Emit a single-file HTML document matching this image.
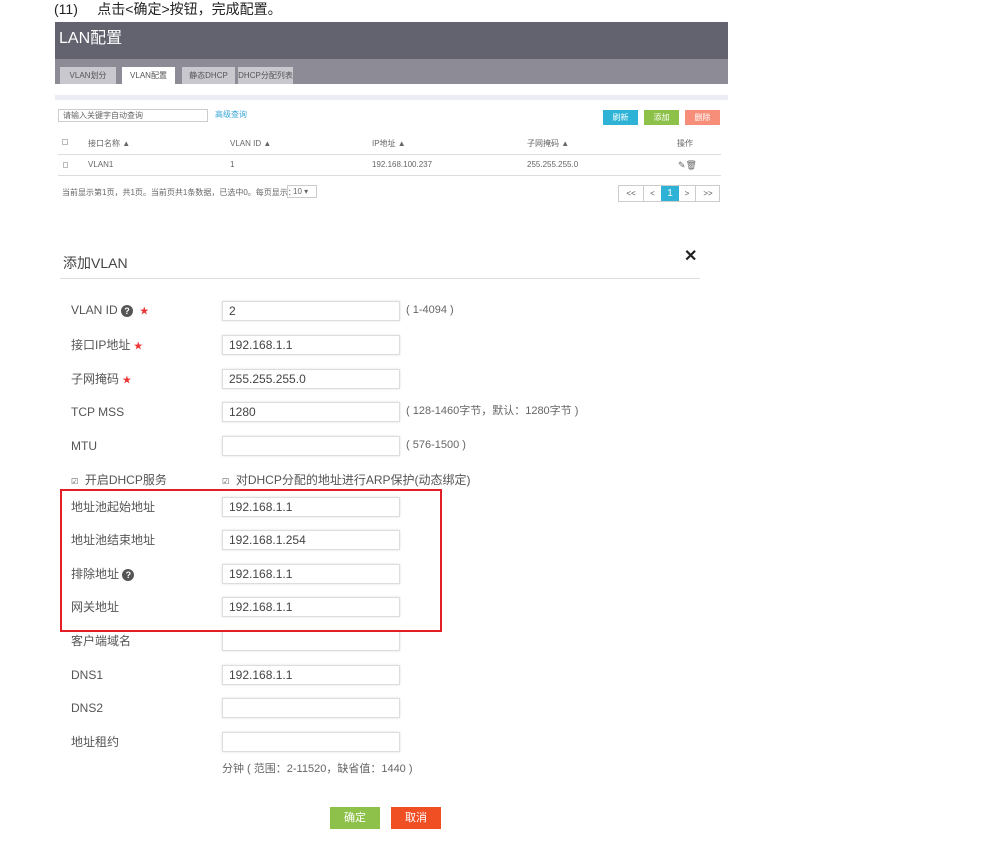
<!DOCTYPE html>
<html><head><meta charset="utf-8"><style>
*{margin:0;padding:0;box-sizing:border-box}
body{width:1005px;height:842px;background:#fff;position:relative;overflow:hidden;font-family:"Liberation Sans","Noto Sans CJK SC",sans-serif;color:#555}
.a{position:absolute;white-space:nowrap}
.s{font-size:8px;color:#666;line-height:10px}
.lab{font-size:12px;color:#555;line-height:14px}
.in{position:absolute;left:222px;width:178px;height:20px;border:1px solid #ddd;box-shadow:0 0 2px #ddd;font-size:12px;color:#444;padding:3px 6px;line-height:13px}
.hint{font-size:11px;color:#666;line-height:13px}
.star{color:#e33;font-size:9px}
.q{display:inline-block;width:12px;height:12px;border-radius:50%;background:#555;color:#fff;font-size:9px;text-align:center;line-height:12px;font-weight:bold;vertical-align:middle}
.btn{position:absolute;height:15px;color:#fff;font-size:8px;text-align:center;line-height:15px}
.tab{position:absolute;top:67px;height:17px;background:#c9c8ce;font-size:8px;color:#555;text-align:center;line-height:17px}
</style></head><body>
<div class="a" style="left:54px;top:0;font-size:14px;color:#222;line-height:18px">(11)&nbsp;&nbsp;&nbsp;&nbsp; 点击&lt;确定&gt;按钮，完成配置。</div>
<div class="a" style="left:55px;top:22px;width:673px;height:37px;background:#62636f"></div>
<div class="a" style="left:59px;top:30px;font-size:16px;color:#fff;line-height:18px">LAN配置</div>
<div class="a" style="left:55px;top:59px;width:673px;height:25px;background:#8d8c96"></div>
<div class="tab" style="left:60px;width:56px">VLAN划分</div>
<div class="tab" style="left:122px;width:53px;background:#fff">VLAN配置</div>
<div class="tab" style="left:182px;width:53px">静态DHCP</div>
<div class="tab" style="left:238px;width:55px">DHCP分配列表</div>
<div class="a" style="left:55px;top:95px;width:673px;height:5px;background:#ecedf4"></div>
<div class="a s" style="left:58px;top:109px;width:150px;height:13px;border:1px solid #ccc;padding:1px 4px;line-height:10px">请输入关键字自动查询</div>
<div class="a s" style="left:215px;top:110px;color:#3aa6d8">高级查询</div>
<div class="btn" style="left:603px;top:110px;width:35px;background:#2eb3d6">刷新</div>
<div class="btn" style="left:644px;top:110px;width:35px;background:#8dc149">添加</div>
<div class="btn" style="left:685px;top:110px;width:35px;background:#f68e7a">删除</div>
<div class="a" style="left:62px;top:139px;width:6px;height:6px;border:1px solid #bbb"></div>
<div class="a s" style="left:88px;top:139px">接口名称 ▲</div>
<div class="a s" style="left:230px;top:139px">VLAN ID ▲</div>
<div class="a s" style="left:372px;top:139px">IP地址 ▲</div>
<div class="a s" style="left:527px;top:139px">子网掩码 ▲</div>
<div class="a s" style="left:677px;top:139px">操作</div>
<div class="a" style="left:58px;top:154px;width:663px;height:1px;background:#ddd"></div>
<div class="a" style="left:63px;top:162px;width:5px;height:6px;border:1px solid #bbb"></div>
<div class="a s" style="left:88px;top:160px">VLAN1</div>
<div class="a s" style="left:230px;top:160px">1</div>
<div class="a s" style="left:372px;top:160px">192.168.100.237</div>
<div class="a s" style="left:527px;top:160px">255.255.255.0</div>
<div class="a s" style="left:678px;top:160px;font-size:9px">✎🗑</div>
<div class="a" style="left:58px;top:175px;width:663px;height:1px;background:#ddd"></div>
<div class="a s" style="left:62px;top:188px">当前显示第1页，共1页。当前页共1条数据，已选中0。每页显示：</div>
<div class="a s" style="left:287px;top:185px;width:30px;height:13px;border:1px solid #ccc;padding:1px 5px">10 ▾</div>
<div class="a" style="left:618px;top:185px;width:102px;height:17px;border:1px solid #ccc;font-size:8px;color:#555">
<span class="a" style="left:0;width:24px;text-align:center;line-height:15px">&lt;&lt;</span>
<span class="a" style="left:24px;width:18px;text-align:center;line-height:15px;border-left:1px solid #ccc">&lt;</span>
<span class="a" style="left:42px;width:18px;height:15px;text-align:center;line-height:15px;background:#2eb3d6;color:#fff;font-size:10px">1</span>
<span class="a" style="left:60px;width:17px;text-align:center;line-height:15px;border-right:1px solid #ccc">&gt;</span>
<span class="a" style="left:77px;width:24px;text-align:center;line-height:15px">&gt;&gt;</span></div>

<div class="a" style="left:63px;top:255px;font-size:14px;color:#444;line-height:16px">添加VLAN</div>
<div class="a" style="left:684px;top:248px;font-size:16px;color:#222;font-weight:bold;line-height:18px">✕</div>
<div class="a" style="left:60px;top:278px;width:640px;height:1px;background:#ddd"></div>

<div class="a lab" style="left:71px;top:303px">VLAN ID <span class="q">?</span>&nbsp; <span class="star">★</span></div>
<div class="in" style="top:301px">2</div><div class="a hint" style="left:406px;top:304px">( 1-4094 )</div>
<div class="a lab" style="left:71px;top:338px">接口IP地址 <span class="star">★</span></div>
<div class="in" style="top:335px">192.168.1.1</div>
<div class="a lab" style="left:71px;top:372px">子网掩码 <span class="star">★</span></div>
<div class="in" style="top:369px">255.255.255.0</div>
<div class="a lab" style="left:71px;top:405px">TCP MSS</div>
<div class="in" style="top:402px">1280</div><div class="a hint" style="left:406px;top:405px">( 128-1460字节，默认：1280字节 )</div>
<div class="a lab" style="left:71px;top:439px">MTU</div>
<div class="in" style="top:436px"></div><div class="a hint" style="left:406px;top:439px">( 576-1500 )</div>
<div class="a lab" style="left:71px;top:473px"><span style="font-size:8px">☑</span>&nbsp; 开启DHCP服务</div>
<div class="a lab" style="left:222px;top:473px"><span style="font-size:8px">☑</span>&nbsp; 对DHCP分配的地址进行ARP保护(动态绑定)</div>
<div class="a lab" style="left:71px;top:500px">地址池起始地址</div><div class="in" style="top:497px">192.168.1.1</div>
<div class="a lab" style="left:71px;top:533px">地址池结束地址</div><div class="in" style="top:530px">192.168.1.254</div>
<div class="a lab" style="left:71px;top:567px">排除地址 <span class="q">?</span></div><div class="in" style="top:564px">192.168.1.1</div>
<div class="a lab" style="left:71px;top:600px">网关地址</div><div class="in" style="top:597px">192.168.1.1</div>
<div class="a lab" style="left:71px;top:634px">客户端域名</div><div class="in" style="top:631px"></div>
<div class="a lab" style="left:71px;top:668px">DNS1</div><div class="in" style="top:665px">192.168.1.1</div>
<div class="a lab" style="left:71px;top:701px">DNS2</div><div class="in" style="top:698px"></div>
<div class="a lab" style="left:71px;top:735px">地址租约</div><div class="in" style="top:732px"></div>
<div class="a hint" style="left:222px;top:763px">分钟 ( 范围：2-11520，缺省值：1440 )</div>
<div class="a" style="left:60px;top:489px;width:382px;height:143px;border:2px solid #e31e24"></div>
<div class="btn" style="left:330px;top:807px;width:50px;height:22px;line-height:22px;font-size:11px;background:#8dc149">确定</div>
<div class="btn" style="left:391px;top:807px;width:50px;height:22px;line-height:22px;font-size:11px;background:#f04e23">取消</div>
</body></html>
